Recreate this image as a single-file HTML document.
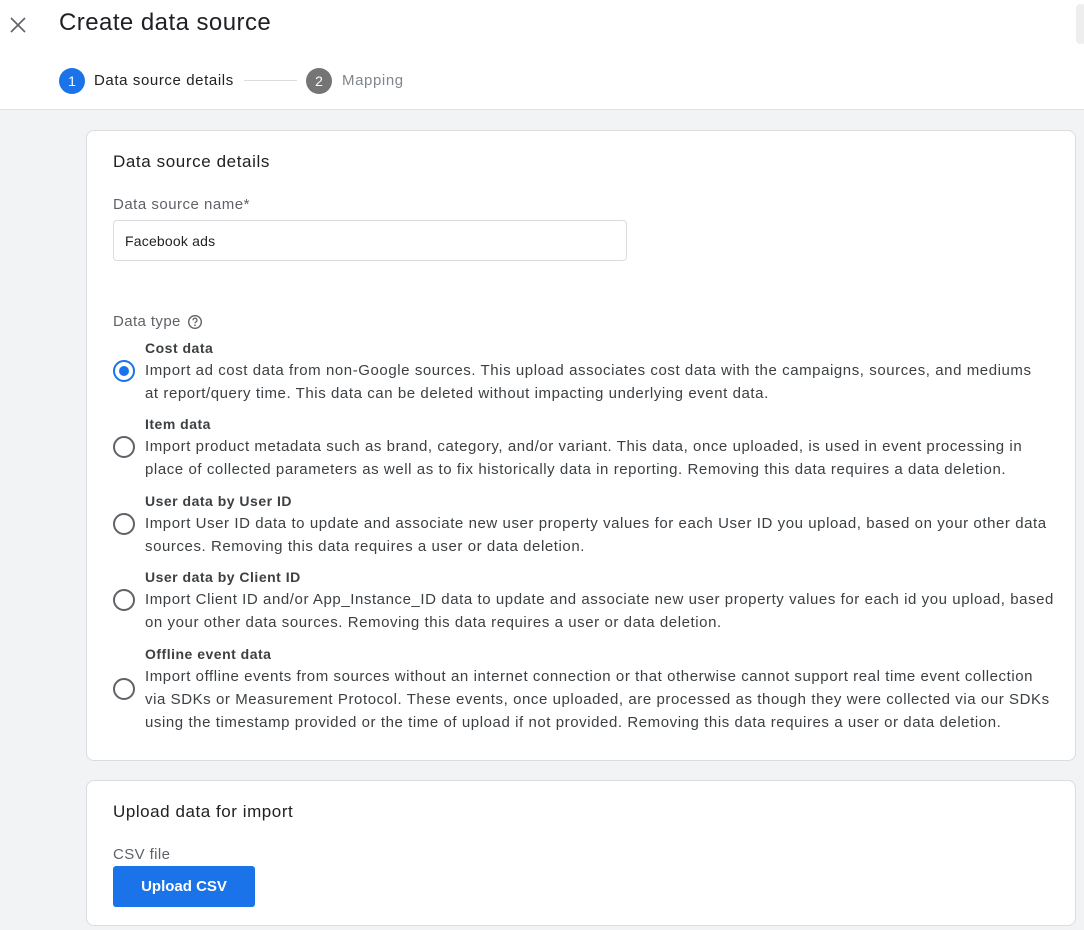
<!DOCTYPE html>
<html><head><meta charset="utf-8"><style>
*{margin:0;padding:0;box-sizing:border-box}
body{width:1084px;height:930px;overflow:hidden;background:#f1f3f4;font-family:"Liberation Sans",Arial,sans-serif;color:#3c4043;position:relative}
.a{position:absolute;white-space:nowrap}
.hdr{position:absolute;left:0;top:0;width:1084px;height:110px;background:#fff;border-bottom:1px solid #e3e3e3}
.card{position:absolute;left:86px;width:990px;background:#fff;border:1px solid #dadce0;border-radius:8px}
.t{font-size:15px;letter-spacing:0.57px;line-height:23px;color:#3c4043}
.b{font-size:14px;font-weight:bold;color:#3c4043;letter-spacing:0.5px}
.r{position:absolute;left:113px;width:22px;height:22px;border:2px solid #5f6368;border-radius:50%}
</style></head><body>
<div class="hdr"></div>
<svg class="a" style="left:10px;top:17px" width="16" height="16" viewBox="0 0 16 16"><path d="M1 1L15 15M15 1L1 15" stroke="#5f6368" stroke-width="1.6"/></svg>
<div class="a" style="left:59px;top:9px;font-size:24px;letter-spacing:0.45px;color:#202124">Create data source</div>
<div class="a" style="left:1076px;top:4px;width:10px;height:40px;background:#eee;border-radius:4px"></div>
<div class="a" style="left:59px;top:68px;width:26px;height:26px;border-radius:50%;background:#1a73e8;color:#fff;font-size:14px;text-align:center;line-height:26px">1</div>
<div class="a" style="left:94px;top:72px;font-size:15px;letter-spacing:0.6px;color:#202124">Data source details</div>
<div class="a" style="left:244px;top:80px;width:53px;height:1px;background:#dadce0"></div>
<div class="a" style="left:306px;top:68px;width:26px;height:26px;border-radius:50%;background:#757575;color:#fff;font-size:14px;text-align:center;line-height:26px">2</div>
<div class="a" style="left:342px;top:72px;font-size:15px;letter-spacing:0.6px;color:#80868b">Mapping</div>

<div class="card" style="top:130px;height:631px"></div>
<div class="a" style="left:113px;top:152px;font-size:17px;letter-spacing:0.6px;color:#202124">Data source details</div>
<div class="a" style="left:113px;top:196px;font-size:15px;letter-spacing:0.5px;color:#5f6368">Data source name*</div>
<div class="a" style="left:113px;top:220px;width:514px;height:41px;border:1px solid #dadce0;border-radius:4px"></div>
<div class="a" style="left:125px;top:233px;font-size:14px;letter-spacing:0.2px;color:#202124">Facebook ads</div>
<div class="a" style="left:113px;top:313px;font-size:15px;letter-spacing:0.4px;color:#5f6368">Data type</div>
<svg class="a" style="left:187px;top:314px" width="16" height="16" viewBox="0 0 16 16"><circle cx="8" cy="8" r="6.3" fill="none" stroke="#5f6368" stroke-width="1.4"/><path d="M6 6.3a2 2 0 1 1 2.6 1.8c-.5.3-.6.6-.6 1.2" fill="none" stroke="#5f6368" stroke-width="1.3"/><circle cx="8" cy="11.2" r=".85" fill="#5f6368"/></svg>

<div class="a b" style="left:145px;top:340px">Cost data</div>
<div class="r" style="top:360px;border-color:#1a73e8"><div style="position:absolute;left:4px;top:4px;width:10px;height:10px;border-radius:50%;background:#1a73e8"></div></div>
<div class="a t" style="left:145px;top:359px">Import ad cost data from non-Google sources. This upload associates cost data with the campaigns, sources, and mediums<br>at report/query time. This data can be deleted without impacting underlying event data.</div>

<div class="a b" style="left:145px;top:416px">Item data</div>
<div class="r" style="top:436px"></div>
<div class="a t" style="left:145px;top:435px">Import product metadata such as brand, category, and/or variant. This data, once uploaded, is used in event processing in<br>place of collected parameters as well as to fix historically data in reporting. Removing this data requires a data deletion.</div>

<div class="a b" style="left:145px;top:493px">User data by User ID</div>
<div class="r" style="top:513px"></div>
<div class="a t" style="left:145px;top:512px">Import User ID data to update and associate new user property values for each User ID you upload, based on your other data<br>sources. Removing this data requires a user or data deletion.</div>

<div class="a b" style="left:145px;top:569px">User data by Client ID</div>
<div class="r" style="top:589px"></div>
<div class="a t" style="left:145px;top:588px">Import Client ID and/or App_Instance_ID data to update and associate new user property values for each id you upload, based<br>on your other data sources. Removing this data requires a user or data deletion.</div>

<div class="a b" style="left:145px;top:646px">Offline event data</div>
<div class="r" style="top:678px"></div>
<div class="a t" style="left:145px;top:665px">Import offline events from sources without an internet connection or that otherwise cannot support real time event collection<br>via SDKs or Measurement Protocol. These events, once uploaded, are processed as though they were collected via our SDKs<br>using the timestamp provided or the time of upload if not provided. Removing this data requires a user or data deletion.</div>

<div class="card" style="top:780px;height:146px"></div>
<div class="a" style="left:113px;top:802px;font-size:17px;letter-spacing:0.55px;color:#202124">Upload data for import</div>
<div class="a" style="left:113px;top:846px;font-size:15px;letter-spacing:0.4px;color:#5f6368">CSV file</div>
<div class="a" style="left:113px;top:866px;width:142px;height:41px;background:#1a73e8;border-radius:3px;color:#fff;font-size:15px;font-weight:bold;text-align:center;line-height:41px">Upload CSV</div>
</body></html>
